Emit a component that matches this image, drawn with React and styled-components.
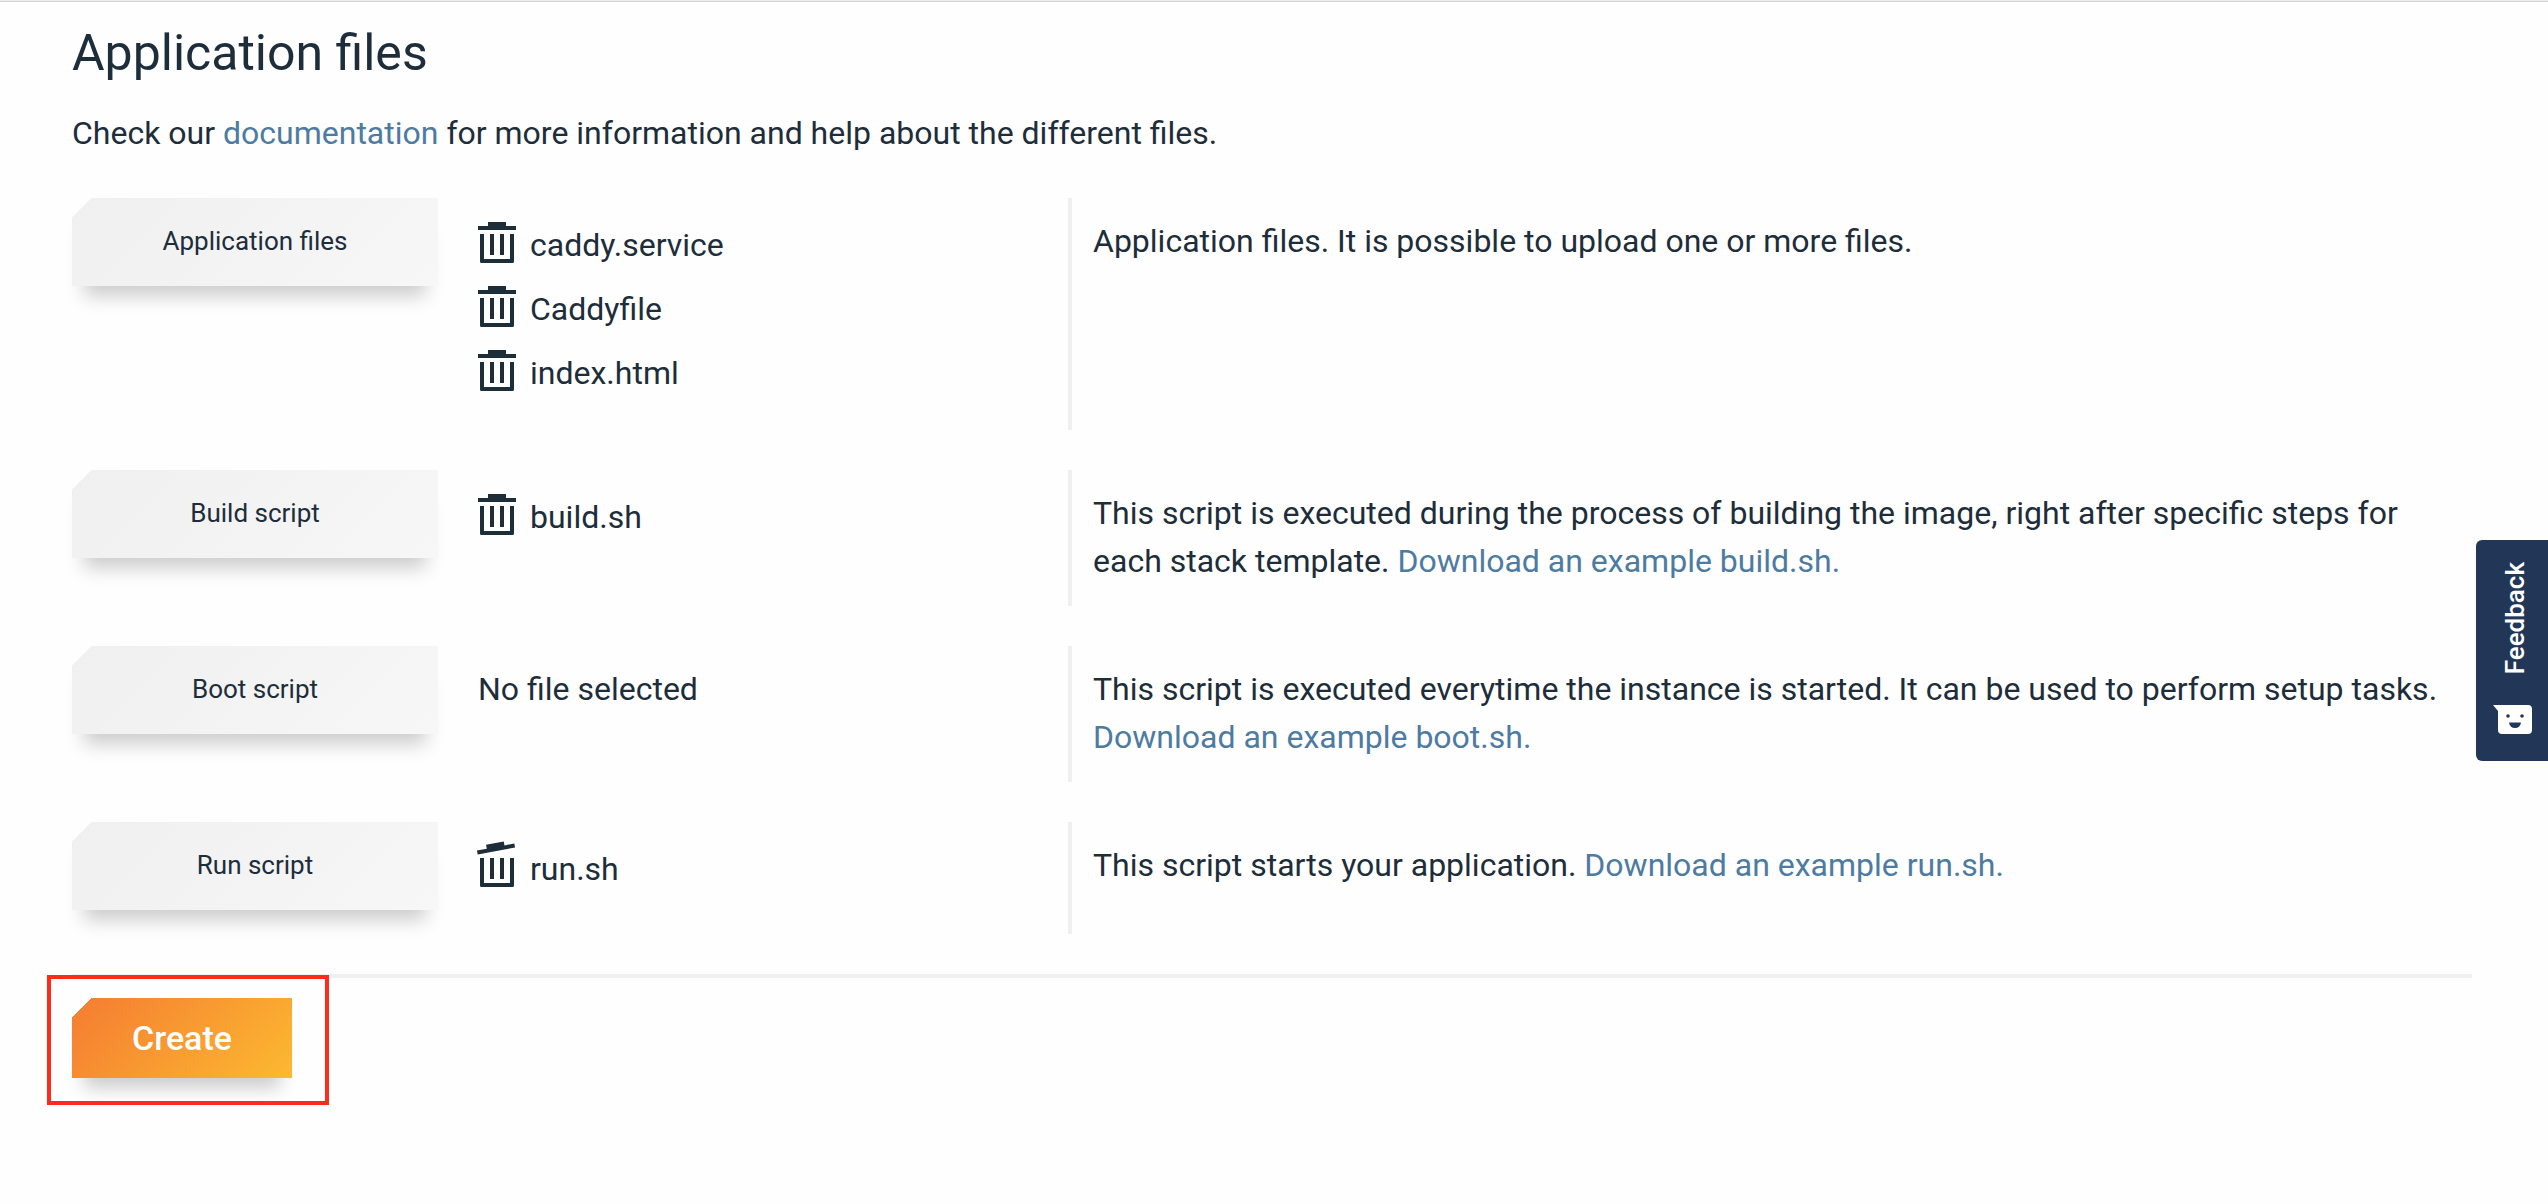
import React from 'react';
import styled, { createGlobalStyle } from 'styled-components';

const ink = '#1d2d3a';
const rule = '#f0f0f0';

const GlobalStyle = createGlobalStyle`
  *, *::before, *::after { box-sizing: border-box; }
  body {
    margin: 0;
    background: #fefefe;
    color: ${ink};
    font: 400 32px/48px Roboto, "Liberation Sans", sans-serif;
  }
  button { font-family: inherit; color: inherit; border: 0; cursor: pointer; }
`;

const Page = styled.main`
  border-top: 1px solid #ececec;
  box-shadow: inset 0 1px #d4d4d4;
  padding: 22px 76px 96px 72px;
`;

const Title = styled.h1`
  margin: 0 0 26px;
  font-size: 50px;
  font-weight: 400;
  line-height: 60px;
`;

const Intro = styled.p`
  margin: 0 0 41px;
`;

const Link = styled.a`
  color: #4e7ba1;
  text-decoration: none;
`;

const Row = styled.section`
  display: grid;
  grid-template-columns: minmax(0, 183fr) minmax(0, 315fr) minmax(0, 702fr);
  margin-bottom: 40px;
`;

const CutButton = styled.button`
  box-shadow: 0 22px 18px -12px rgba(0, 0, 0, 0.2);
`;

const UploadButton = styled(CutButton)`
  height: 88px;
  margin-bottom: 24px;
  padding: 0 0 2px;
  font-size: 26px;
  line-height: 32px;
  background: linear-gradient(135deg, transparent 14px, #f0f0f0 14px, #f7f7f7);
`;

const Files = styled.ul`
  list-style: none;
  margin: 0;
  padding: 20px 0 20px 40px;
`;

const File = styled.li`
  display: flex;
  gap: 12px;
  margin-bottom: 10px;
  line-height: 54px;
`;

const NoFile = styled.p`
  margin: 0;
  padding: 19px 0 21px 40px;
`;

const Description = styled.p`
  margin: 0;
  padding: 19px 20px 21px 21px;
  border-left: 4px solid ${rule};
`;

const TrashButton = styled.button`
  display: flex;
  padding: 0;
  background: none;
`;

const Divider = styled.hr`
  margin: 0 0 20px;
  border: 0;
  height: 4px;
  background: ${rule};
`;

const Highlight = styled.div`
  position: relative;
  display: inline-flex;

  &::after {
    content: "";
    position: absolute;
    inset: -23px -37px -27px -25px;
    border: 4px solid #fc2b1c;
    pointer-events: none;
  }
`;

const CreateButton = styled(CutButton)`
  height: 80px;
  width: 220px;
  color: #fff;
  font-size: 34px;
  font-weight: 500;
  background: linear-gradient(135deg, transparent 14px, #f58032 14px, #fcb930);
`;

const FeedbackTab = styled.button`
  position: fixed;
  top: 540px;
  right: 0;
  width: 72px;
  height: 221px;
  padding: 22px 0 27px;
  display: flex;
  flex-direction: column;
  align-items: center;
  justify-content: space-between;
  border-radius: 6px 0 0 6px;
  background: #223757;
`;

const FeedbackLabel = styled.span`
  writing-mode: vertical-rl;
  transform: rotate(180deg);
  margin-left: 6px;
  color: #fff;
  font-size: 26px;
  font-weight: 500;
  line-height: 32px;
`;

const Icon = styled.svg`
  display: block;
  overflow: visible;
`;

function TrashIcon({ open }) {
  return (
    <Icon width="40" height="54" viewBox="0 0 40 54" fill={ink} aria-hidden="true">
      <g transform={open ? 'translate(-1 -3) rotate(-10.5 19 10)' : undefined}>
        <path d="M0 8H10V4H28V8H38V12H0Z" />
      </g>
      <path d="M2 16H6V41H32V16H36V43.500Q36 45 34.500 45H3.500Q2 45 2 43.500Z" />
      <path d="M12 16h4v21h-4zM22 16h4v21h-4z" />
    </Icon>
  );
}

function SmileIcon() {
  return (
    <Icon width="39" height="29" viewBox="0 0 39 29" aria-hidden="true">
      <path d="M0 0H35Q39 0 39 4V25Q39 29 35 29H9Q5 29 5 25V6Z" fill="#fff" />
      <circle cx="15" cy="11" r="1.800" fill="#223757" />
      <circle cx="29" cy="11" r="1.800" fill="#223757" />
      <path d="M16 17.500H28Q27 23 22 23Q17 23 16 17.500Z" fill="#223757" />
    </Icon>
  );
}

const rows = [
  {
    label: 'Application files',
    files: ['caddy.service', 'Caddyfile', 'index.html'],
    text: 'Application files. It is possible to upload one or more files.',
  },
  {
    label: 'Build script',
    files: ['build.sh'],
    text: 'This script is executed during the process of building the image, right after specific steps for each stack template.',
    link: 'Download an example build.sh.',
  },
  {
    label: 'Boot script',
    files: [],
    text: 'This script is executed everytime the instance is started. It can be used to perform setup tasks.',
    link: 'Download an example boot.sh.',
  },
  {
    label: 'Run script',
    files: ['run.sh'],
    open: true,
    text: 'This script starts your application.',
    link: 'Download an example run.sh.',
  },
];

function FileRow({ label, files, open, text, link }) {
  return (
    <Row>
      <UploadButton type="button">{label}</UploadButton>
      {files.length > 0 ? (
        <Files>
          {files.map((name) => (
            <File key={name}>
              <TrashButton type="button" aria-label={`Delete ${name}`}>
                <TrashIcon open={open} />
              </TrashButton>
              {name}
            </File>
          ))}
        </Files>
      ) : (
        <NoFile>No file selected</NoFile>
      )}
      <Description>
        {text} {link && <Link href="#">{link}</Link>}
      </Description>
    </Row>
  );
}

export default function App() {
  return (
    <>
      <GlobalStyle />
      <Page>
        <Title>Application files</Title>
        <Intro>
          Check our <Link href="#">documentation</Link> for more information and help about the
          different files.
        </Intro>
        {rows.map((row) => (
          <FileRow key={row.label} {...row} />
        ))}
        <Divider />
        <Highlight>
          <CreateButton type="button">Create</CreateButton>
        </Highlight>
      </Page>
      <FeedbackTab type="button">
        <FeedbackLabel>Feedback</FeedbackLabel>
        <SmileIcon />
      </FeedbackTab>
    </>
  );
}
